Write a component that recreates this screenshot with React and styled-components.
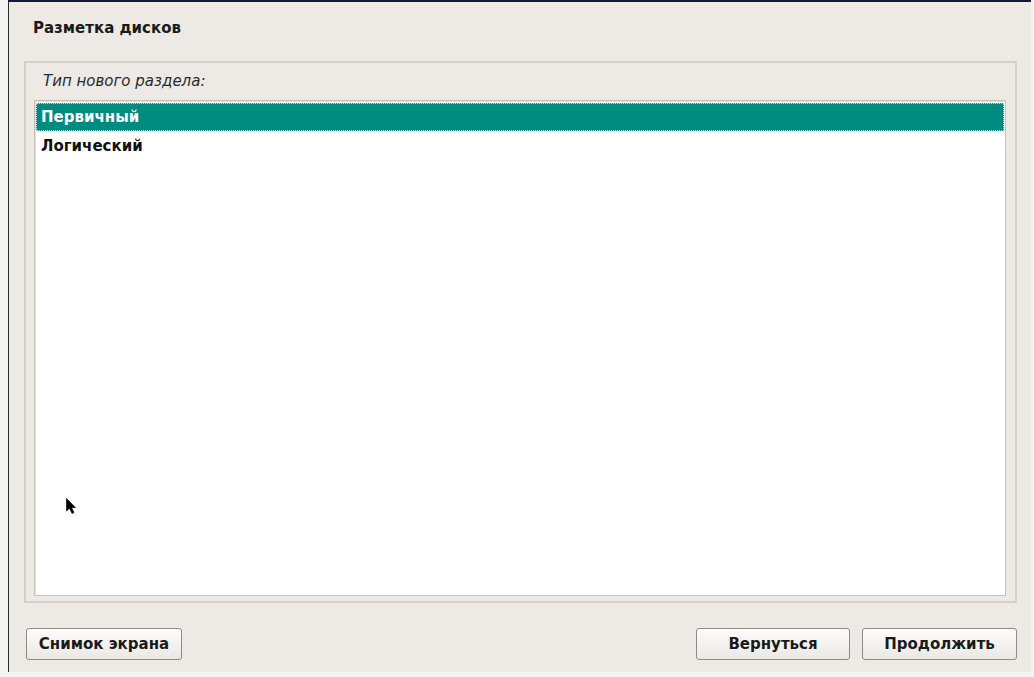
import React from "react";
import styled, { createGlobalStyle } from "styled-components";

const Global = createGlobalStyle`
  html, body { margin: 0; padding: 0; background: #f4f4f4; }
  body { font-family: "DejaVu Sans", Verdana, sans-serif; }
  #root { width: 1034px; height: 677px; }
`;

const Page = styled.div`
  width: 1034px;
  height: 677px;
  display: flex;
  background: #f4f4f4;
  position: relative;
`;

const Screen = styled.div`
  margin-left: 8px;
  width: 1023px;
  height: 672px;
  box-sizing: border-box;
  border-left: 1px solid #2a2a2a;
  border-top: 2px solid #14173a;
  background: #edeae6;
  display: flex;
  flex-direction: column;
`;

const Title = styled.h1`
  margin: 0;
  height: 59px;
  box-sizing: border-box;
  padding: 17px 0 0 24px;
  font-size: 15px;
  font-weight: bold;
  color: #1a1a1a;
`;

const Group = styled.div`
  margin: 0 14px 0 15px;
  height: 542px;
  box-sizing: border-box;
  border: 2px solid #d6cfc7;
  display: flex;
  flex-direction: column;
  padding: 0 9px 5px 8px;
`;

const Caption = styled.div`
  height: 37px;
  box-sizing: border-box;
  padding: 9px 0 0 9px;
  font-size: 15px;
  font-style: italic;
  color: #2a2a2a;
`;

const List = styled.ul`
  flex: 1;
  margin: 0;
  padding: 2px 1px;
  list-style: none;
  background: #fff;
  border: 1px solid #c9c1b8;
  box-shadow: inset 1px 1px 0 #e4dfd9;
`;

const Item = styled.li`
  height: ${({ selected }) => (selected ? "28px" : "30px")};
  box-sizing: border-box;
  display: flex;
  align-items: center;
  padding-left: ${({ selected }) => (selected ? "4px" : "5px")};
  font-size: 15px;
  font-weight: bold;
  color: ${({ selected }) => (selected ? "#ffffff" : "#111")};
  background: ${({ selected }) => (selected ? "#008b80" : "transparent")};
  border: ${({ selected }) => (selected ? "1px dotted #bfe3df" : "none")};
`;

const Footer = styled.div`
  flex: 1;
  display: flex;
  align-items: center;
  padding: 12px 14px 0 17px;
  gap: 12px;
`;

const Spacer = styled.div`
  flex: 1;
`;

const Button = styled.button`
  width: ${({ w }) => w || "154px"};
  height: 32px;
  border: 1px solid #8f8a84;
  border-radius: 3px;
  background: linear-gradient(#fdfcfb, #ebe8e4);
  font-family: "DejaVu Sans", Verdana, sans-serif;
  font-size: 15px;
  font-weight: bold;
  color: #1a1a1a;
  padding: 0;
`;

const Cursor = styled.svg`
  position: absolute;
  left: 66px;
  top: 498px;
`;

export default function App() {
  return (
    <Page>
      <Global />
      <Screen>
        <Title>Разметка дисков</Title>
        <Group>
          <Caption>Тип нового раздела:</Caption>
          <List>
            <Item selected>Первичный</Item>
            <Item>Логический</Item>
          </List>
        </Group>
        <Footer>
          <Button w="156px">Снимок экрана</Button>
          <Spacer />
          <Button>Вернуться</Button>
          <Button w="155px">Продолжить</Button>
        </Footer>
      </Screen>
      <Cursor width="12" height="20" viewBox="0 0 12 20">
        <path d="M0.5 0.5 L0.5 13 L3.5 10.2 L6 15.5 L8 14.6 L5.6 9.5 L9.5 9.5 Z" fill="#000" stroke="#000" strokeWidth="0.6" />
      </Cursor>
    </Page>
  );
}
